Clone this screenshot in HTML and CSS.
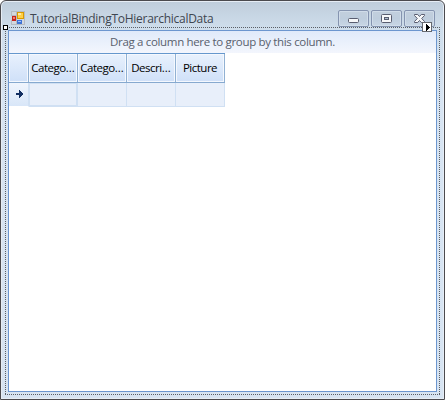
FILE: index.html
```html
<!DOCTYPE html>
<html lang="en">
<head>
<meta charset="utf-8">
<title>TutorialBindingToHierarchicalData</title>
<link rel="stylesheet" href="styles.css">
</head>
<body>
<div class="window">
  <header class="titlebar">
    <svg class="app-icon" width="14" height="14" viewBox="0 0 14 14" shape-rendering="crispEdges">
      <path d="M.5.5h5v4h-5zM.5 9.500h5v4h-5zM5.500.5h8v13h-8z" fill="#d3d8de" stroke="#b5bbc2"/>
      <rect x="1" y="5" width="4" height="5" fill="#c8241c"/><rect x="2" y="6" width="2" height="2" fill="#f08070"/>
      <rect x="6" y="1" width="7" height="7" fill="#d99a00"/><rect x="7" y="2" width="5" height="5" fill="#ffd046"/><rect x="7" y="2" width="3" height="2" fill="#ffeaa0"/>
      <rect x="6" y="9" width="5" height="4" fill="#3f73d4"/><rect x="7" y="10" width="3" height="1" fill="#9bc0fa"/>
    </svg>
    <h1 class="title">TutorialBindingToHierarchicalData</h1>
    <div class="buttons">
      <span class="button"><svg width="29" height="15" viewBox="0 0 29 15"><rect x="9.500" y="7.500" width="10" height="4" rx="1" fill="#f6f7f9" stroke="#595d70"/></svg></span>
      <span class="button"><svg width="29" height="15" viewBox="0 0 29 15"><rect x="9.500" y="3.500" width="10" height="8" rx="1" fill="#f6f7f9" stroke="#595d70"/><rect x="12.500" y="6.500" width="4" height="2" fill="#aebdce" stroke="#595d70"/></svg></span>
      <span class="button"><svg width="29" height="15" viewBox="0 0 29 15"><path d="M9.500 3.500h3.200l1.800 2 1.800-2h3.200v1L16.700 7.500l2.800 3v1h-3.200l-1.800-2-1.800 2H9.500v-1l2.800-3-2.800-3z" fill="#f6f7f9" stroke="#595d70"/></svg></span>
    </div>
  </header>
  <main class="grid">
    <div class="group-panel">Drag a column here to group by this column.</div>
    <div class="row head">
      <div class="cell"></div><div class="cell">Catego<span class="more">...</span></div><div class="cell">Catego<span class="more">...</span></div><div class="cell">Descri<span class="more">...</span></div><div class="cell">Picture</div>
    </div>
    <div class="row data">
      <div class="cell marker"><svg width="7" height="8" viewBox="0 0 7 8" shape-rendering="crispEdges"><path d="M0 3h3V0h1v1h1v1h1v1h1v2H6v1H5v1H4v1H3V5H0z" fill="#122e61"/></svg></div>
      <div class="cell current"></div><div class="cell"></div><div class="cell"></div><div class="cell"></div>
    </div>
  </main>
  <div class="selection"><i class="dots top"></i><i class="dots bottom"></i><i class="dots left"></i><i class="dots right"></i></div>
  <span class="handle"></span>
  <span class="smart-tag"><svg width="7" height="7" viewBox="0 0 7 7" shape-rendering="crispEdges"><path d="M2 0h1v1h1v1h1v1h1v1h-1v1h-1v1h-1v1h-1z"/></svg></span>
</div>
</body>
</html>
```

FILE: styles.css
```css
* { box-sizing: border-box; }
body { margin: 0; background: #fff; font: 12px/16px "Open Sans", "Noto Sans", sans-serif; }
.window {
  position: relative;
  width: 445px;
  height: 400px;
  padding: 0 7px 7px;
  border: 1px solid #4b4a4e;
  border-radius: 6px 6px 0 0;
  background: linear-gradient(#bfcddb, #cfdeec 28px, #d7e4f2 100px);
  box-shadow: inset 0 0 0 1px #e6edf5;
}
.titlebar { display: flex; height: 29px; padding: 10px 2px 0 3px; }
.app-icon { flex: none; margin-right: 5px; }
.title {
  margin: -1px 0 0;
  flex: 1;
  color: #3f4650;
  font-size: 12px;
  font-weight: 400;
  line-height: 17px;
  letter-spacing: -0.27px;
  white-space: nowrap;
}
.buttons { display: flex; gap: 2px; margin-top: -1px; }
.button {
  width: 31px;
  height: 17px;
  border: 1px solid #8594b0;
  border-radius: 2px;
  background: linear-gradient(#c2cfdd, #becddd 50%, #c8d6e5);
  box-shadow: inset 0 0 0 1px #d0dce9;
}
.button svg { display: block; }
.grid { height: 362px; border: 1px solid #6c96cf; background: #fff; }
.group-panel {
  height: 22px;
  padding-top: 3px;
  background: linear-gradient(#e0eafa, #f3f6fd);
  color: #59606d;
  font-size: 11.500px;
  letter-spacing: -0.33px;
  text-align: center;
  white-space: nowrap;
}
.row { display: grid; grid-template-columns: 20px repeat(4, 49px); width: 216px; }
.head { height: 30px; border-top: 1px solid #6597cd; border-bottom: 1px solid #86a9cf; }
.head .cell {
  padding-top: 6px;
  border-right: 1px solid #91b1d3;
  background: linear-gradient(#e8f1fd, #cfe0f8);
  box-shadow: inset 0 0 0 1px #f4f8fe;
  color: #000;
  font-size: 11.500px;
  letter-spacing: -0.5px;
  text-align: center;
  white-space: nowrap;
}
.more { letter-spacing: 0; }
.data { height: 24px; }
.data .cell { border-right: 1px solid #d0e0f3; border-bottom: 1px solid #d0e0f3; background: #e8effa; }
.data .marker {
  padding: 7px 0 0 7px;
  border-color: #d0e0f3;
  border-bottom-color: #fff;
  background: linear-gradient(#f0f5fd, #d8e6f8);
}
.marker svg { display: block; }
.data .current { box-shadow: inset 0 0 0 1px #d0e0f3; }
.selection { position: absolute; left: 4px; top: 26px; width: 435px; height: 368px; pointer-events: none; }
.dots { position: absolute; }
.top, .bottom { left: 0; right: 0; height: 1px; background: repeating-linear-gradient(90deg, #5b5f66 0 1px, transparent 1px 2px); }
.left, .right { top: 0; bottom: 0; width: 1px; background: repeating-linear-gradient(#5b5f66 0 1px, transparent 1px 2px); }
.top { top: 0; }
.bottom { bottom: 0; }
.left { left: 0; }
.right { right: 0; }
.handle { position: absolute; left: 2px; top: 24px; width: 5px; height: 5px; border: 1px solid #000; background: #fff; }
.smart-tag { position: absolute; left: 421px; top: 21px; width: 10px; height: 10px; padding: 1px 0 0 1px; border: 1px solid #66696f; background: #fff; }
.smart-tag svg { display: block; }
```
